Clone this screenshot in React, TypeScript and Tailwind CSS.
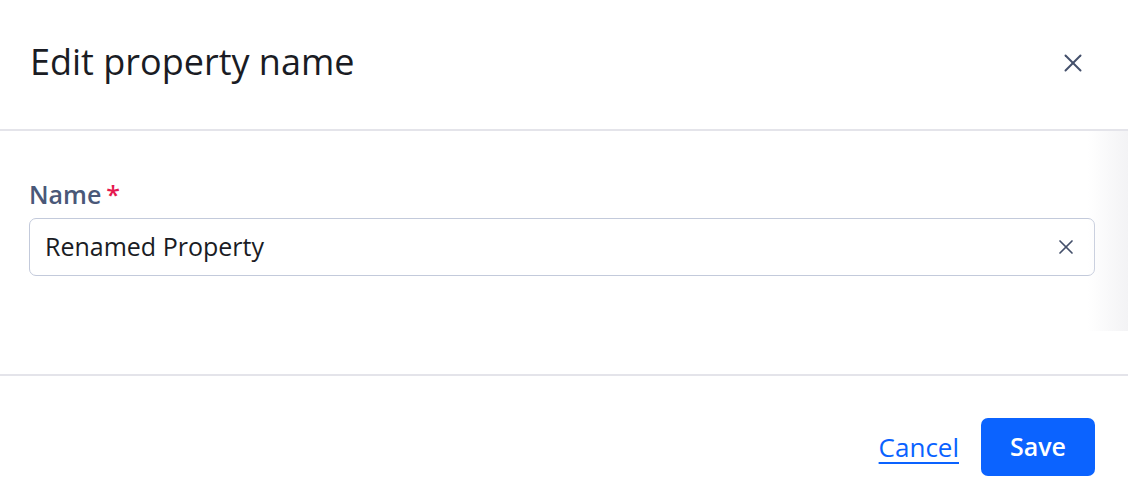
import { X } from 'lucide-react'

export default function App() {
  return (
    <div
      className="relative w-[1128px] h-[498px] bg-white overflow-hidden"
      style={{ fontFamily: '"Open Sans", "Noto Sans", sans-serif' }}
    >
      {/* Header */}
      <div className="flex items-center justify-between h-[131px] pl-[30px] pr-[40px] border-b-2 border-[#e4e4ea]">
        <h2 className="text-[36px] leading-none text-[#1a1c24] font-normal -mt-[6px]">Edit property name</h2>
        <button className="text-[#44506b] -mt-[4px]">
          <X size={30} strokeWidth={1.6} />
        </button>
      </div>

      {/* Body */}
      <div className="relative h-[200px] pt-[50px] px-[29px] pr-[33px]">
        <label className="flex items-center text-[25px] font-semibold text-[#4a5878] leading-none h-[26px]">
          Name<span className="text-[#e5194f] ml-[5px]">*</span>
        </label>
        <div className="mt-[11px] flex items-center h-[58px] border border-[#c3cadb] rounded-[7px] pl-[15px] pr-[16px]">
          <span className="flex-1 text-[25px] text-[#1a1c24]">Renamed Property</span>
          <X size={24} strokeWidth={1.7} className="text-[#44506b]" />
        </div>
        {/* scroll shadow */}
        <div className="absolute right-0 top-0 h-full w-[40px] bg-gradient-to-r from-transparent to-[#f3f3f5] pointer-events-none" />
      </div>

      {/* Footer */}
      <div className="mt-[43px] border-t-2 border-[#e4e4ea] flex items-center justify-end gap-[22px] pt-[42px] pr-[33px]">
        <a className="text-[26px] text-[#0a62ff] underline underline-offset-[5px] decoration-2">Cancel</a>
        <button className="w-[114px] h-[58px] rounded-[7px] bg-[#0b63ff] text-white text-[25px] font-semibold">
          Save
        </button>
      </div>
    </div>
  )
}
